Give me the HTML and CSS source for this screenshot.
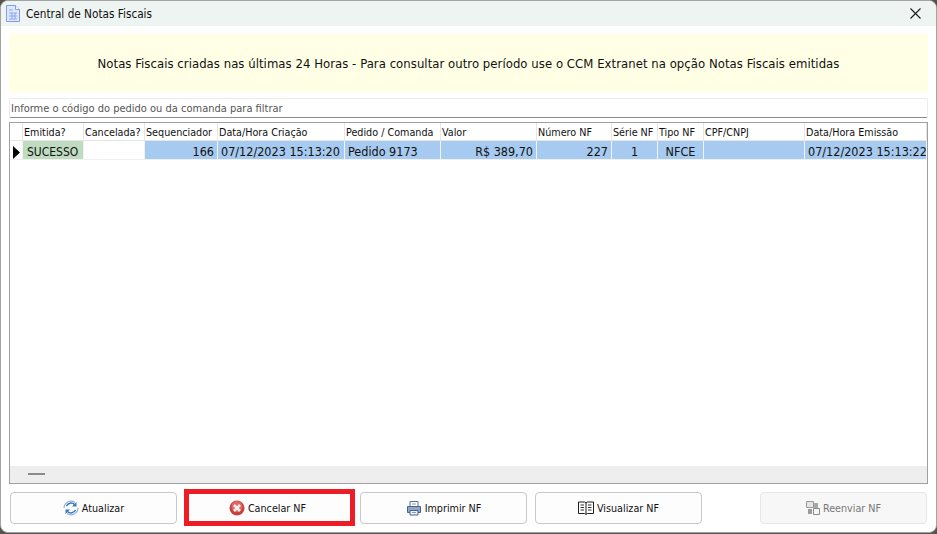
FILE: index.html
```html
<!DOCTYPE html>
<html lang="pt-BR">
<head>
<meta charset="utf-8">
<title>Central de Notas Fiscais</title>
<link rel="stylesheet" href="styles.css">
</head>
<body>
<div class="window">
  <header class="titlebar">
    <svg class="app-icon" width="14" height="17" viewBox="0 0 14 17"><path d="M.5.5h9l4 4v12H.5z" fill="#dfe8ff" stroke="#7f9cf0"/><path d="M9.500.5v4h4" fill="#fff" stroke="#7f9cf0"/><path d="M3 5h4M3 8h8M3 11h8M3 14h8M6 8v6M9 8v6" stroke="#8fa6e8"/></svg>
    <span class="title">Central de Notas Fiscais</span>
    <svg class="close" width="11" height="11" viewBox="0 0 11 11"><path d="M.5.5l10 10M10.500.5l-10 10" stroke="#1a1a1a" stroke-width="1.100"/></svg>
  </header>
  <main class="content">
    <div class="banner">Notas Fiscais criadas nas últimas 24 Horas - Para consultar outro período use o CCM Extranet na opção Notas Fiscais emitidas</div>
    <div class="filter">Informe o código do pedido ou da comanda para filtrar</div>
    <section class="grid">
      <div class="table">
        <div class="row head">
          <div class="cell ind"></div>
          <div class="cell">Emitida?</div>
          <div class="cell">Cancelada?</div>
          <div class="cell">Sequenciador</div>
          <div class="cell">Data/Hora Criação</div>
          <div class="cell">Pedido / Comanda</div>
          <div class="cell">Valor</div>
          <div class="cell">Número NF</div>
          <div class="cell">Série NF</div>
          <div class="cell">Tipo NF</div>
          <div class="cell">CPF/CNPJ</div>
          <div class="cell">Data/Hora Emissão</div>
        </div>
        <div class="row data">
          <div class="cell ind"><svg width="7" height="13" viewBox="0 0 7 13"><path d="M0 0l7 6.500-7 6.500z" fill="#000"/></svg></div>
          <div class="cell ok">SUCESSO</div>
          <div class="cell blank"></div>
          <div class="cell right">166</div>
          <div class="cell">07/12/2023 15:13:20</div>
          <div class="cell">Pedido 9173</div>
          <div class="cell right">R$ 389,70</div>
          <div class="cell right">227</div>
          <div class="cell center">1</div>
          <div class="cell center">NFCE</div>
          <div class="cell"></div>
          <div class="cell">07/12/2023 15:13:22</div>
        </div>
      </div>
      <div class="scrollbar"><span class="thumb"></span></div>
    </section>
    <footer class="actions">
      <button class="btn">
        <svg width="16" height="16" viewBox="0 0 16 16" fill="none"><path d="M1 8a7 7 0 0 1 11-5.500M15 8a7 7 0 0 1-11 5.500" stroke="#8fb4e0" stroke-width="1.200"/><path d="M3.500 6A5 5 0 0 1 11.500 4.500M12.500 10A5 5 0 0 1 4.500 11.500" stroke="#3a78bd" stroke-width="1.500"/><path d="M13.500 2v4.500H9zM2.500 14V9.500H7z" fill="#3a78bd"/></svg>
        Atualizar
      </button>
      <div class="highlight">
        <button class="btn inner">
          <svg width="16" height="16" viewBox="0 0 16 16"><circle cx="8" cy="8" r="7.500" fill="#c9403f"/><circle cx="8" cy="6.500" r="5.500" fill="#e06a63"/><path d="M5 5l6 6M11 5l-6 6" stroke="#f3f0f0" stroke-width="2.600"/></svg>
          Cancelar NF
        </button>
      </div>
      <button class="btn">
        <svg width="16" height="16" viewBox="0 0 16 16"><path d="M4 7V1.500h8V7" fill="#fff" stroke="#5a6f94"/><path d="M1.500 6.500h13v6h-13z" fill="#8ea6cc" stroke="#4d6288"/><path d="M4 10.500h8v4.500H4z" fill="#eef3fa" stroke="#4d6288"/><path d="M6 4h4M6 12.500h4" stroke="#8a9ab8"/></svg>
        Imprimir NF
      </button>
      <button class="btn">
        <svg width="16" height="14" viewBox="0 0 16 14" fill="none"><path d="M.5 1h6.200L8 2l1.300-1h6.200v11.500H9.500L8 13.500l-1.500-1H.5zM8 2v11" fill="#fff" stroke="#1c1c1c"/><path d="M2.500 4h3.500M2.500 6.500h3.500M2.500 9h3.500M10 4h3.500M10 6.500h3.500M10 9h3.500" stroke="#333"/></svg>
        Visualizar NF
      </button>
      <span class="spacer"></span>
      <button class="btn disabled" disabled>
        <svg width="14" height="14" viewBox="0 0 14 14"><path d="M.5.5h7v6h-7z" fill="#e4e4e4" stroke="#9a9a9a"/><path d="M2 8h4v5H2z" fill="#9a9a9a"/><path d="M8 2h4v5H8z" fill="#a8a8a8"/><path d="M7.500 7.500h6v6h-6z" fill="#f6f6f6" stroke="#8a8a8a"/></svg>
        Reenviar NF
      </button>
    </footer>
  </main>
</div>
</body>
</html>
```
FILE: styles.css
```css
* { box-sizing: border-box; }
html, body { margin: 0; height: 100%; }
body {
  background: #55534f;
  overflow: hidden;
  font-family: "DejaVu Sans", sans-serif;
  font-stretch: condensed;
  color: #111;
}
.window {
  width: 937px;
  height: 533px;
  background: #fff;
  border: 1px solid #a3a3a3;
  border-radius: 8px;
  overflow: hidden;
  display: flex;
  flex-direction: column;
}
.titlebar {
  height: 25px;
  flex: none;
  background: #eef4f1;
  display: flex;
  align-items: center;
  padding: 0 15px 0 5px;
  font-size: 11.7px;
}
.app-icon { margin-right: 6px; }
.title { flex: 1; }
.content {
  flex: 1;
  display: flex;
  flex-direction: column;
  padding: 8px 8px 7px 8px;
  min-height: 0;
}
.banner {
  height: 58px;
  flex: none;
  background: #ffffe6;
  display: flex;
  align-items: center;
  justify-content: center;
  font-size: 13px;
  letter-spacing: .04px;
}
.filter {
  height: 20px;
  margin-top: 6px;
  flex: none;
  background: #fff;
  border: 1px solid #ececec;
  border-bottom-color: #8c8c8c;
  border-radius: 2px;
  padding-left: 1px;
  font-size: 11px;
  line-height: 20px;
  color: #555;
}
.grid {
  margin-top: 4px;
  flex: 1;
  min-height: 0;
  border: 1px solid #a0a0a0;
  display: flex;
  flex-direction: column;
}
.table { flex: 1; overflow: hidden; }
.row {
  display: grid;
  grid-template-columns: 13px 61px 61px 73px 127px 96px 96px 75px 46px 46px 101px 122px;
}
.head { height: 18px; }
.head .cell {
  font-size: 10.7px;
  line-height: 20px;
  padding-left: 1px;
  border-right: 1px solid #e6e6e6;
  border-bottom: 1px solid #e6e6e6;
  white-space: nowrap;
  overflow: hidden;
}
.data { height: 20px; }
.data .cell {
  font-size: 12.5px;
  line-height: 22px;
  height: 19px;
  padding: 0 3px;
  background: #a6caf0;
  border-right: 1px solid #f2f2f2;
  border-bottom: 1px solid #f0f0f0;
  white-space: nowrap;
  overflow: hidden;
}
.data .ind { background: #fff; padding: 3px 0 0 3px; }
.data .ok { background: #c0dcc0; padding-left: 4px; font-size: 12px; }
.data .blank { background: #fff; }
.right { text-align: right; }
.data .right { padding-right: 3px; }
.center { text-align: center; }
.scrollbar {
  height: 17px;
  flex: none;
  background: #eeeeee;
  padding: 7px 0 0 18px;
}
.thumb { display: block; width: 17px; height: 2px; background: #8b8b8b; }
.actions {
  flex: none;
  margin-top: 7px;
  display: flex;
  align-items: center;
  height: 34px;
}
.btn {
  width: 167px;
  height: 32px;
  flex: none;
  margin-left: 1px;
  margin-right: 7px;
  background: #fdfdfd;
  border: 1px solid #c8c8c8;
  border-radius: 4px;
  display: flex;
  align-items: center;
  justify-content: center;
  gap: 3px;
  font: inherit;
  font-stretch: condensed;
  font-size: 10.7px;
  color: #111;
  padding: 0;
}
.highlight {
  flex: none;
  width: 171px;
  height: 37px;
  margin-right: 4px;
  margin-bottom: 2px;
  border: 5px solid #ee1c25;
  display: flex;
  align-items: center;
  justify-content: center;
}
.btn.inner {
  width: 161px;
  height: 27px;
  margin: 0;
  border: 0;
  border-radius: 0;
  padding: 2px 4px 0 0;
}
.spacer { width: 50px; flex: none; }
.btn.disabled {
  margin-right: 0;
  background: #f7f7f7;
  border-color: #e6e6e6;
  color: #777;
}
```
